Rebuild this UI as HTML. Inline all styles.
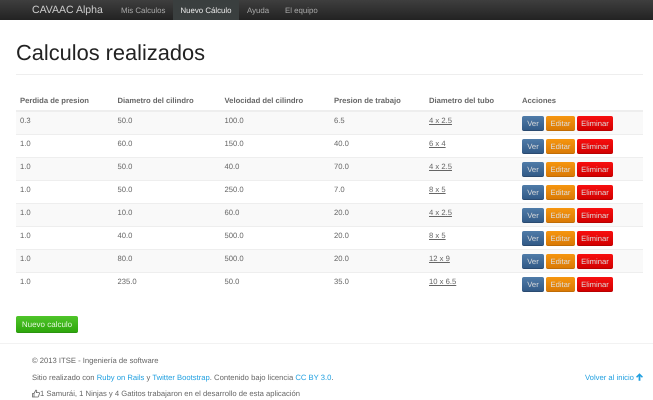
<!DOCTYPE html>
<html lang="es">
<head>
<meta charset="utf-8">
<title>Calculos realizados</title>
<style>
html,body{margin:0;padding:0;background:#fff}
body{position:relative;width:653px;height:400px;overflow:hidden;font-family:"Liberation Sans",sans-serif;font-size:7.66px;color:#666;text-rendering:geometricPrecision}
#w{position:absolute;left:0;top:0;width:653px;height:400px;filter:blur(.3px)}
a{text-decoration:none}
.nav{position:absolute;left:0;top:0;width:653px;height:20px;background:linear-gradient(#3e3e3e,#222)}
.nav a{position:absolute;top:0;height:20px;line-height:21px;color:#aaa;white-space:nowrap;font-size:7.85px}
.nav .brand{left:32px;top:0;font-size:10.5px;color:#ccc;line-height:21px}
.nav .active{left:173px;width:66px;text-align:center;background:#3a3f3f;color:#eee}
h1{position:absolute;left:16px;top:39px;margin:0;font-size:21.8px;line-height:28px;font-weight:400;color:#222;white-space:nowrap}
.hr1{position:absolute;left:16px;top:74px;width:627px;height:1px;background:#eee}
table{position:absolute;left:16px;top:90px;width:627px;border-collapse:collapse;table-layout:fixed}
th{padding:1px 4px 0;text-align:left;font-size:7.66px;font-weight:700;color:#666;border-bottom:2px solid #eee;box-sizing:border-box;height:21px;white-space:nowrap}
td{height:23px;box-sizing:border-box;padding:0 4px 4px;border-bottom:1px solid #eee;white-space:nowrap}
tr:last-child td{border-bottom:0}
tr.o td{background:#f9f9f9}
td u{color:#666}
.b{display:inline-block;box-sizing:border-box;height:15px;line-height:15px;margin:1px 2px 0 0;border-radius:2px;color:#ddd;text-align:center;font-size:7.66px;vertical-align:top;position:relative;top:2px}
.v{width:22px;background:linear-gradient(#4f7ba8,#325a87);border-bottom:1px solid #2a4a70}
.e{width:29px;background:linear-gradient(#f6960f,#da7a05);border-bottom:1px solid #c06c05}
.x{width:36px;background:linear-gradient(#f70f0f,#d30000);border-bottom:1px solid #b80000}
.new{position:absolute;left:16px;top:316px;width:62px;height:17px;line-height:17px;text-align:center;background:linear-gradient(#4fc52a,#2ea70c);border-radius:2px;color:#e6f7e0;font-size:8px;border-bottom:1px solid #2a9410;box-sizing:border-box}
.hr2{position:absolute;left:0;top:343px;width:653px;height:1px;background:#f2f2f2}
.f{position:absolute;left:32px;white-space:nowrap;line-height:11px;color:#666}
.f a,.top{color:#1f9fe0}
.top{position:absolute;left:585px;top:372px;line-height:11px;white-space:nowrap;font-size:7.66px}
svg{display:block}
</style>
</head>
<body>
<div id="w">
<div class="nav">
<a class="brand" href="#">CAVAAC Alpha</a>
<a href="#" style="left:121px">Mis Calculos</a>
<a class="active" href="#">Nuevo Cálculo</a>
<a href="#" style="left:247px">Ayuda</a>
<a href="#" style="left:285px">El equipo</a>
</div>
<h1>Calculos realizados</h1>
<div class="hr1"></div>
<table>
<colgroup><col style="width:97.5px"><col style="width:107px"><col style="width:109.5px"><col style="width:95px"><col style="width:93px"><col></colgroup>
<tr><th>Perdida de presion</th><th>Diametro del cilindro</th><th>Velocidad del cilindro</th><th>Presion de trabajo</th><th>Diametro del tubo</th><th>Acciones</th></tr>
<tr class="o"><td>0.3</td><td>50.0</td><td>100.0</td><td>6.5</td><td><u>4 x 2.5</u></td><td><a class="b v">Ver</a><a class="b e">Editar</a><a class="b x">Eliminar</a></td></tr>
<tr><td>1.0</td><td>60.0</td><td>150.0</td><td>40.0</td><td><u>6 x 4</u></td><td><a class="b v">Ver</a><a class="b e">Editar</a><a class="b x">Eliminar</a></td></tr>
<tr class="o"><td>1.0</td><td>50.0</td><td>40.0</td><td>70.0</td><td><u>4 x 2.5</u></td><td><a class="b v">Ver</a><a class="b e">Editar</a><a class="b x">Eliminar</a></td></tr>
<tr><td>1.0</td><td>50.0</td><td>250.0</td><td>7.0</td><td><u>8 x 5</u></td><td><a class="b v">Ver</a><a class="b e">Editar</a><a class="b x">Eliminar</a></td></tr>
<tr class="o"><td>1.0</td><td>10.0</td><td>60.0</td><td>20.0</td><td><u>4 x 2.5</u></td><td><a class="b v">Ver</a><a class="b e">Editar</a><a class="b x">Eliminar</a></td></tr>
<tr><td>1.0</td><td>40.0</td><td>500.0</td><td>20.0</td><td><u>8 x 5</u></td><td><a class="b v">Ver</a><a class="b e">Editar</a><a class="b x">Eliminar</a></td></tr>
<tr class="o"><td>1.0</td><td>80.0</td><td>500.0</td><td>20.0</td><td><u>12 x 9</u></td><td><a class="b v">Ver</a><a class="b e">Editar</a><a class="b x">Eliminar</a></td></tr>
<tr><td>1.0</td><td>235.0</td><td>50.0</td><td>35.0</td><td><u>10 x 6.5</u></td><td><a class="b v">Ver</a><a class="b e">Editar</a><a class="b x">Eliminar</a></td></tr>
</table>
<a class="new" href="#">Nuevo calculo</a>
<div class="hr2"></div>
<div class="f" style="top:355px">© 2013 ITSE - Ingeniería de software</div>
<div class="f" style="top:372px">Sitio realizado con <a href="#">Ruby on Rails</a> y <a href="#">Twitter Bootstrap</a>. Contenido bajo licencia <a href="#">CC BY 3.0</a>.</div>
<svg style="position:absolute;left:32px;top:389px" width="8" height="9" viewBox="0 0 8 9"><path d="M0.5 4.5H2V8H0.5ZM2 4.5L3.8 1.2C4.6 1 4.9 1.6 4.7 2.4L4.4 3.6H7C7.6 3.6 7.7 4.2 7.4 4.7L6.5 7.5C6.3 8 6 8 5.6 8H2" fill="none" stroke="#666" stroke-width=".8"/></svg>
<div class="f" style="top:388px;left:40px">1 Samurái, 1 Ninjas y 4 Gatitos trabajaron en el desarrollo de esta aplicación</div>
<a class="top" href="#">Volver al inicio <svg style="display:inline-block;vertical-align:-1px" width="7" height="8" viewBox="0 0 7 8"><path d="M3.5 0.3L7 3.8L5.9 4.8L4.4 3.3V7.8H2.6V3.3L1.1 4.8L0 3.8Z" fill="#1f9fe0"/></svg></a>
</div>
</body>
</html>
